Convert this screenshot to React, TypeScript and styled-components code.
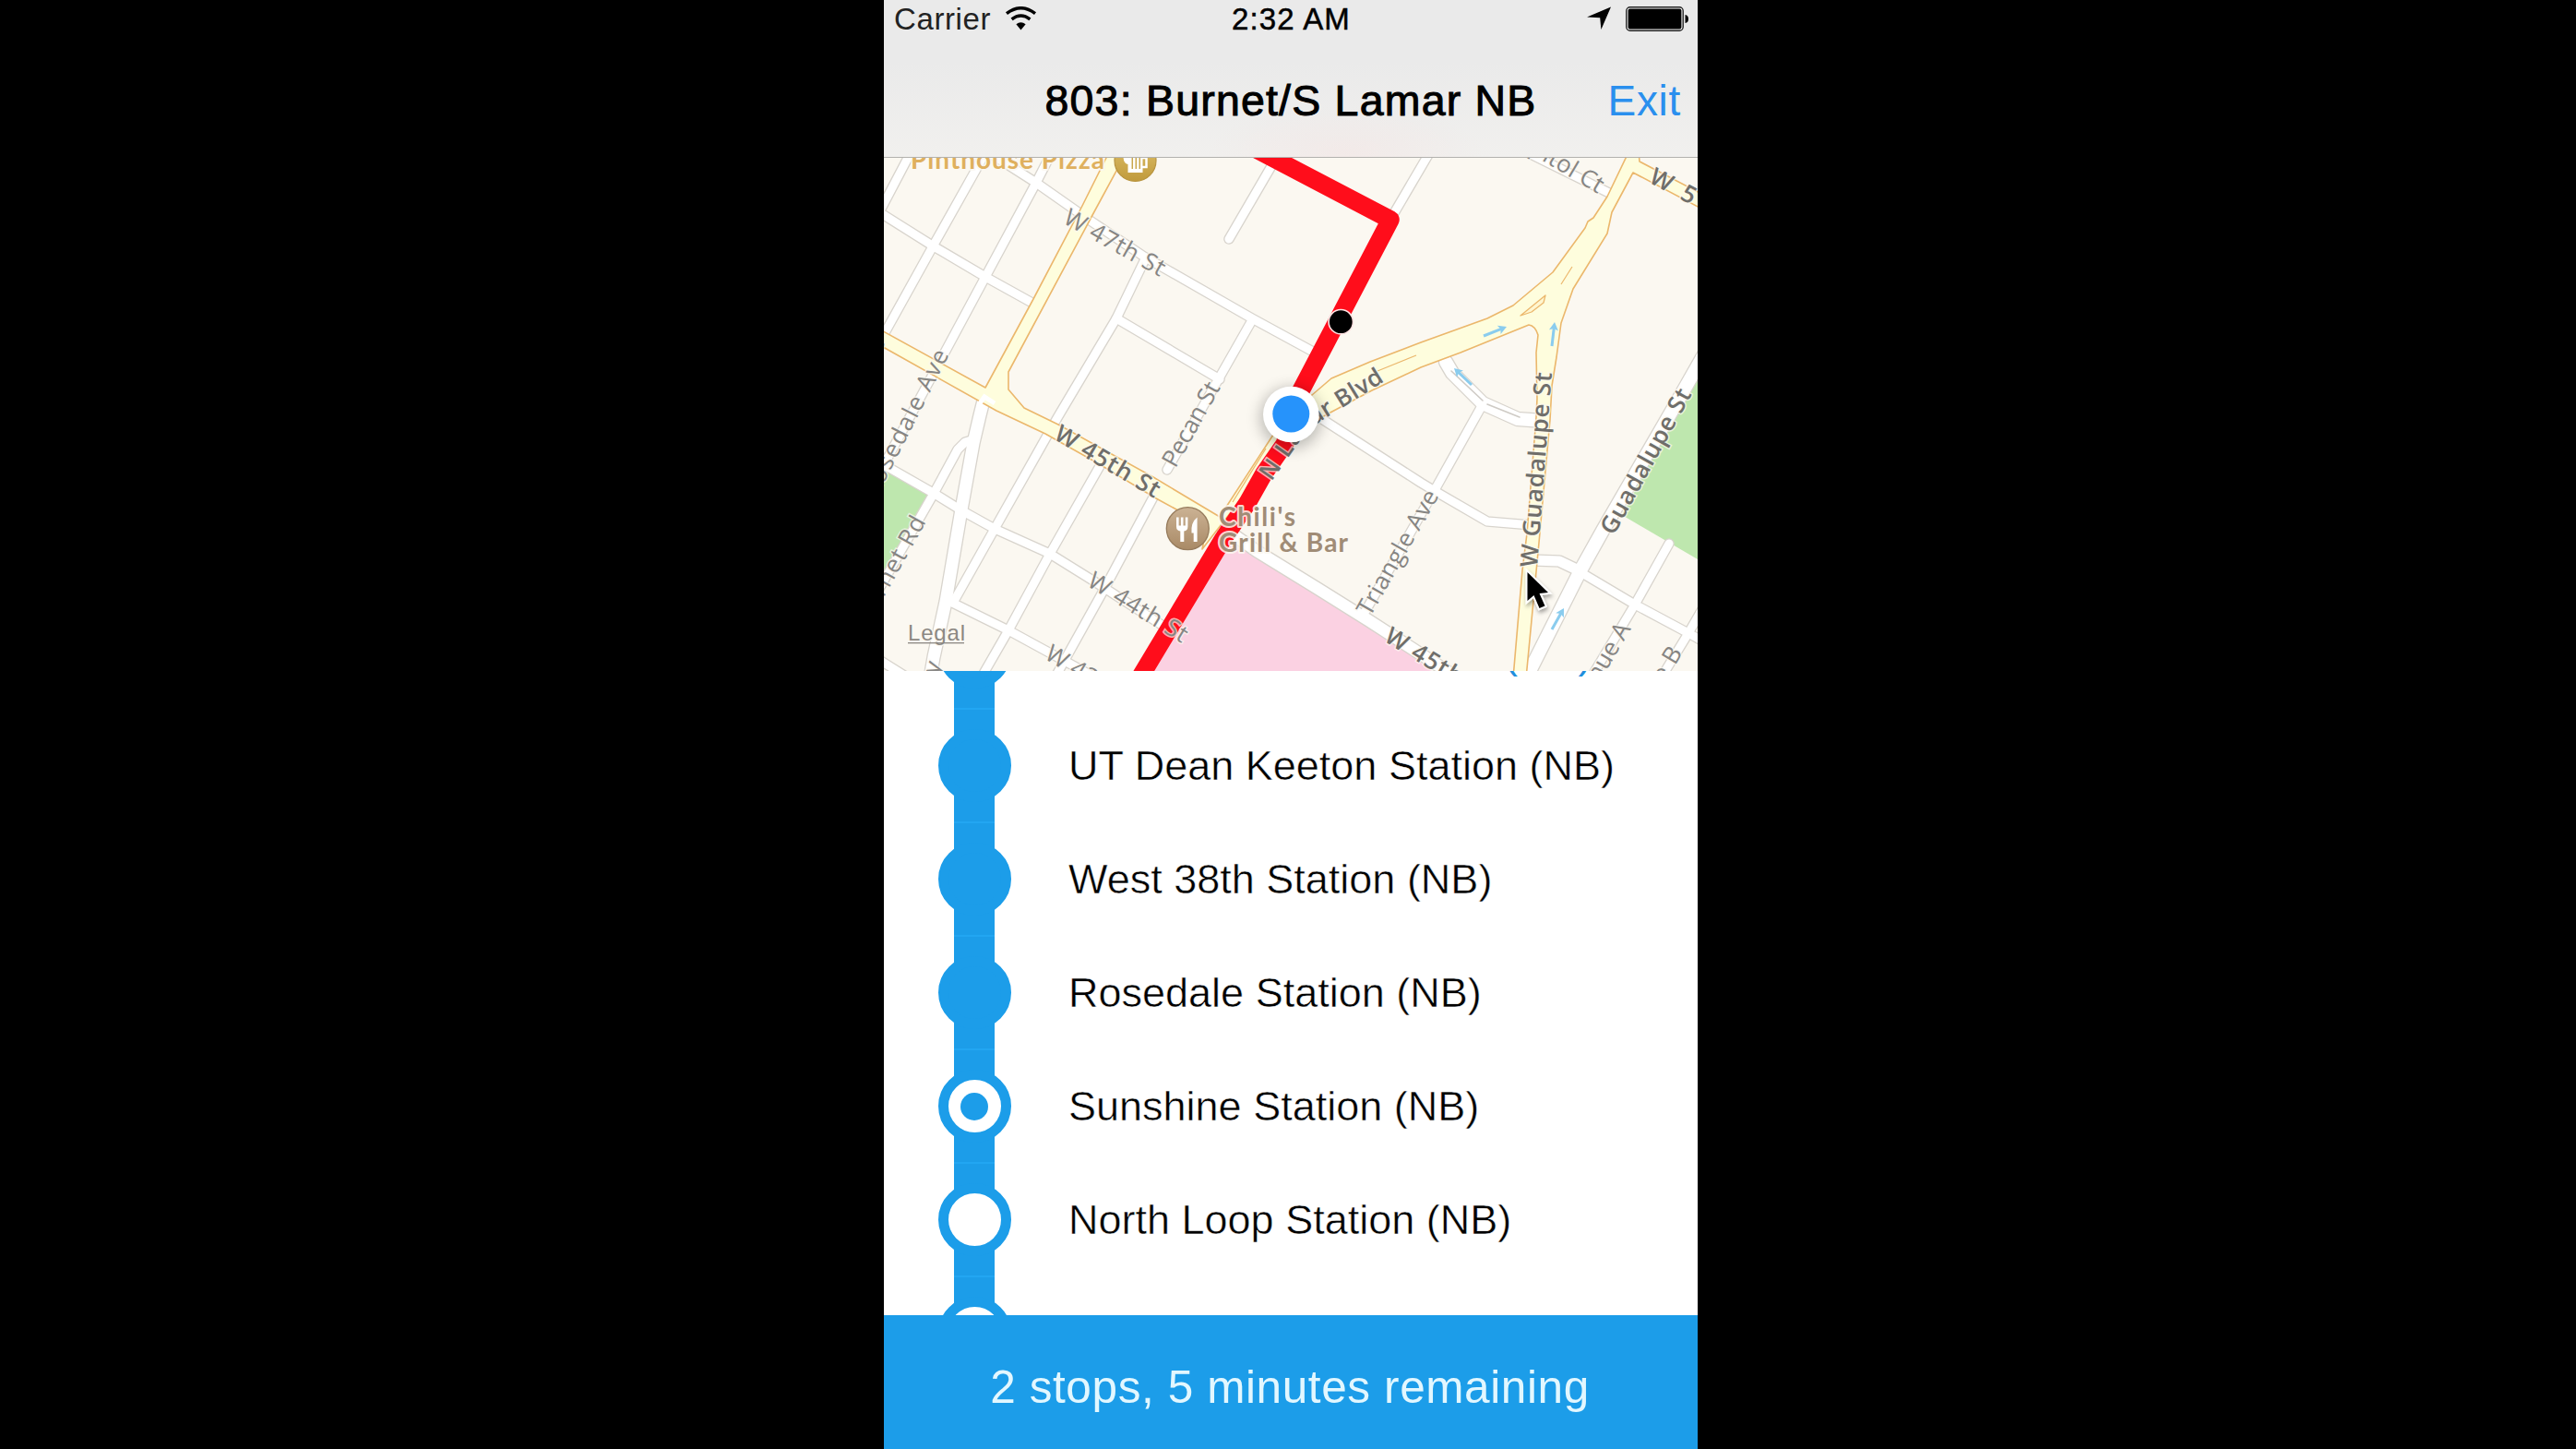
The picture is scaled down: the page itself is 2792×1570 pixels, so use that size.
import React from "react";
import styled, { createGlobalStyle, css } from "styled-components";

const BLUE = "#1c9de9";
const SANS = '"Liberation Sans", Arial, sans-serif';
const MAP_FONT = '"Open Sans", "Noto Sans", sans-serif';

const GlobalStyle = createGlobalStyle`
  html, body { margin: 0; background: #000; }
  * { box-sizing: border-box; }
`;

const Stage = styled.div`
  height: 1570px;
  padding-left: 958px;
  background: #000;
  overflow: hidden;
`;

const Phone = styled.main`
  display: flex;
  flex-direction: column;
  width: 882px;
  height: 1570px;
  background: #fff;
  font-family: ${SANS};
  color: #000;
`;

const Header = styled.header`
  flex: none;
  height: 171px;
  border-bottom: 1px solid #b2b1ae;
  background:
    radial-gradient(ellipse 150px 50px at 500px 165px, rgba(255, 200, 200, 0.14), transparent),
    linear-gradient(#eaeaea 0 40%, #f1f0ee);
`;

const StatusBar = styled.div`
  display: grid;
  grid-template-columns: 1fr auto 1fr;
  align-items: center;
  height: 42px;
  padding: 0 10px 0 11px;
  font-size: 33px;
  line-height: 42px;
  white-space: nowrap;
`;

const StatusGroup = styled.div<{ $end?: boolean }>`
  display: flex;
  align-items: center;
  justify-content: ${(p) => (p.$end ? "flex-end" : "flex-start")};
  gap: ${(p) => (p.$end ? 16 : 15)}px;
  letter-spacing: 0.6px;
  color: #222;
  svg { display: block; margin-bottom: 2px; }
`;

const Clock = styled.span`
  letter-spacing: 1.1px;
  -webkit-text-stroke: 0.5px #000;
`;

const NavBar = styled.div`
  display: grid;
  grid-template-columns: 1fr auto 1fr;
  align-items: center;
  height: 128px;
  padding: 6px 18px 0;
  line-height: 60px;
  white-space: nowrap;
`;

const Title = styled.h1`
  grid-column: 2;
  margin: 0;
  font-size: 46.5px;
  font-weight: 400;
  letter-spacing: 1.2px;
  -webkit-text-stroke: 1px #000;
`;

const ExitButton = styled.button`
  justify-self: end;
  padding: 0;
  border: 0;
  background: none;
  font: 46px/60px ${SANS};
  letter-spacing: 0.7px;
  color: #2a8fee;
`;

const MapPane = styled.section`
  flex: none;
  height: 556px;
  background: #fbf8f1;
  svg { display: block; }
`;

const StopList = styled.ul`
  flex: none;
  height: 698px;
  margin: 0;
  padding: 0;
  overflow: hidden;
  list-style: none;
`;

const StopRow = styled.li`
  display: flex;
  align-items: center;
  gap: 62px;
  height: 123px;
  padding-left: 58px;
  &:first-child { margin-top: -82px; }
`;

const Rail = styled.div`
  display: grid;
  place-items: center;
  width: 80px;
  height: 123px;
  background:
    linear-gradient(#22a6f2, #22a6f2) center top / 44px 1px no-repeat,
    linear-gradient(#22a6f2, #22a6f2) center bottom / 44px 1px no-repeat,
    linear-gradient(${BLUE}, ${BLUE}) center / 44px 100% no-repeat;
`;

type StopState = "passed" | "current" | "ahead";

const Node = styled.span<{ $state: StopState }>`
  display: grid;
  place-items: center;
  width: 79px;
  height: 79px;
  border: 11px solid ${BLUE};
  border-radius: 50%;
  background: ${(p) => (p.$state === "passed" ? BLUE : "#fff")};
  ${(p) =>
    p.$state === "current" &&
    css`
      &::after {
        content: "";
        width: 30px;
        height: 30px;
        border-radius: 50%;
        background: ${BLUE};
      }
    `}
`;

const StopName = styled.span<{ $peek?: boolean }>`
  font-size: 45px;
  line-height: 60px;
  white-space: nowrap;
  color: ${(p) => (p.$peek ? "#1f8fdd" : "#000")};
  padding: ${(p) => (p.$peek ? "4px 0 0 472px" : "0")};
  letter-spacing: ${(p) => (p.$peek ? "1px" : "0")};
  -webkit-text-stroke: ${(p) => (p.$peek ? "0" : "0.5px #fff")};
`;

const Footer = styled.footer`
  flex: 1;
  display: flex;
  align-items: center;
  justify-content: center;
  padding: 10px 2px 0 0;
  background: ${BLUE};
  font-size: 49.5px;
  letter-spacing: 0.6px;
  color: #e2f7ff;
  white-space: nowrap;
`;

const WifiIcon = () => (
  <svg width="35" height="26" viewBox="0 0 35 26">
    <path d="M2 7.6Q17.5 -4.2 33 7.6" fill="none" stroke="#000" strokeWidth="3.4" />
    <path d="M7.6 13.8Q17.5 6 27.4 13.8" fill="none" stroke="#000" strokeWidth="3.4" />
    <path d="M12.4 19.2Q17.5 15.2 22.6 19.2L17.5 25.4Z" />
  </svg>
);

const LocationIcon = () => (
  <svg width="26" height="26" viewBox="0 0 26 26">
    <path d="M26 0.5L15.4 25L14.2 12.2L0 11.4Z" />
  </svg>
);

const BatteryIcon = () => (
  <svg width="68" height="27" viewBox="0 0 68 27">
    <rect x="0.8" y="0.8" width="61.4" height="25.4" rx="4" fill="#f4f4f4" stroke="#222" strokeWidth="1.4" />
    <rect x="2.6" y="2.6" width="57.8" height="21.8" rx="2" />
    <path d="M64.5 9q3.5 0.5 3.5 4.5t-3.5 4.5z" />
  </svg>
);

const STREETS: [string, number?][] = [
  ["1000,143 983,173 952,232"],
  ["1066,169 1056,187 1011,267 956,366"],
  ["1140,165 1123,198 1068,300 1025,380 960,500"],
  ["950,228 1012,267 1068,300 1124,331"],
  ["1076,168 1123,198 1180,238 1240,278 1357,345 1425,382"],
  ["1240,283 1210,345 1147,451 1135,472 1078,573 1033,653"],
  ["1210,345 1322,411"],
  ["1357,347 1320,412 1265,509"],
  ["1378,180 1332,259"],
  ["1552,161 1508,236"],
  ["1056,476 1046,479 1038,487 1013,533 970,608 950,643"],
  ["950,499 1013,535 1042,553 1078,573 1138,600 1183,628 1262,679"],
  ["1196,498 1138,600 1093,683 1063,735"],
  ["1252,535 1197,638 1143,735"],
  ["1030,652 1093,683 1137,707 1185,733"],
  ["950,713 985,735"],
  ["1067,430 1062,450 1055,480 1042,552 1025,652 1012,712 1008,735", 13],
  ["1425,449 1540,523 1555,532 1612,565 1660,569"],
  ["1607,438 1555,531 1480,662"],
  ["1567,392 1574,404 1607,437 1645,454 1672,456", 14],
  ["1325,571 1362,597 1427,637 1483,672 1545,712 1580,735", 12.5],
  ["1655,165 1746,210"],
  ["1847,384 1818,435 1737,575 1713,618 1654,735", 14],
  ["1662,607 1690,608 1713,619", 11],
  ["1713,620 1772,655 1830,686 1848,696"],
  ["1809,589 1772,655 1724,735"],
  ["1848,655 1830,686 1800,735"],
];

type LabelSpec = {
  t: string;
  from: [number, number];
  to: [number, number];
  strong?: boolean;
};

const LABELS: LabelSpec[] = [
  { t: "W 47th St", from: [1151, 241], to: [1257, 300] },
  { t: "W 45th St", from: [1141, 475], to: [1251, 540], strong: true },
  { t: "W 44th St", from: [1177, 634], to: [1281, 697] },
  { t: "W 43rd St", from: [1131, 713], to: [1233, 775] },
  { t: "Rosedale Ave", from: [949, 541], to: [1029, 384] },
  { t: "e", from: [953, 384], to: [961, 369] },
  { t: "Pecan St", from: [1274, 508], to: [1323, 420] },
  { t: "Triangle Ave", from: [1485, 669], to: [1560, 537] },
  { t: "y", from: [1017, 732], to: [1021, 719] },
  { t: "Burnet Rd", from: [941, 678], to: [1004, 565] },
  { t: "Capitol Ct", from: [1630, 149], to: [1732, 210] },
  { t: "W 5", from: [1786, 197], to: [1833, 222], strong: true },
  { t: "W Guadalupe St", from: [1666, 615], to: [1682, 404], strong: true },
  { t: "Guadalupe St", from: [1749, 581], to: [1834, 427], strong: true },
  { t: "W 45th St", from: [1499, 694], to: [1609, 761], strong: true },
  { t: "Avenue A", from: [1711, 778], to: [1768, 681] },
  { t: "Avenue B", from: [1764, 808], to: [1824, 707] },
  { t: "N La", from: [1378, 522], to: [1413, 472], strong: true },
  { t: "ar Blvd", from: [1424, 461], to: [1501, 413], strong: true },
];

const MapLabel = ({ t, from, to, strong }: LabelSpec) => {
  const dx = to[0] - from[0];
  const dy = to[1] - from[1];
  const angle = (Math.atan2(dy, dx) * 180) / Math.PI;
  return (
    <text
      transform={`translate(${from[0]} ${from[1]}) rotate(${angle})`}
      textLength={Math.hypot(dx, dy)}
      fontSize={strong ? 26 : 26}
      fontWeight={strong ? 600 : 400}
      fill={strong ? "#6f6e6a" : "#868583"}
      stroke="#fbf8f1"
      strokeOpacity="0.7"
      strokeWidth="3"
      paintOrder="stroke"
    >
      {t}
    </text>
  );
};

const OneWayArrow = ({ from, to }: { from: [number, number]; to: [number, number] }) => {
  const dx = to[0] - from[0];
  const dy = to[1] - from[1];
  const len = Math.hypot(dx, dy);
  return (
    <g transform={`translate(${from[0]} ${from[1]}) rotate(${(Math.atan2(dy, dx) * 180) / Math.PI})`} fill="#8accee">
      <rect x="0" y="-1.5" width={len - 5} height="3" />
      <path d={`M${len} 0L${len - 9} -5L${len - 7} 0L${len - 9} 5Z`} />
    </g>
  );
};

const TransitMap = () => (
  <svg width="882" height="556" viewBox="958 171 882 556" fontFamily={MAP_FONT}>
    <defs>
      <linearGradient id="food" x1="0" y1="0" x2="0" y2="1">
        <stop offset="0" stopColor="#cbb294" />
        <stop offset="1" stopColor="#a98a66" />
      </linearGradient>
      <linearGradient id="beer" x1="0" y1="0" x2="0" y2="1">
        <stop offset="0" stopColor="#e0c26c" />
        <stop offset="1" stopColor="#c09a3c" />
      </linearGradient>
      <filter id="soft" x="-50%" y="-50%" width="200%" height="200%">
        <feGaussianBlur stdDeviation="8" />
      </filter>
      <filter id="cursorShadow" x="-50%" y="-50%" width="200%" height="200%">
        <feDropShadow dx="1" dy="3" stdDeviation="2" floodOpacity="0.35" />
      </filter>
    </defs>

    <rect x="958" y="171" width="882" height="556" fill="#fbf8f1" />
    <path d="M958 508L1009 537L958 624Z" fill="#bee7ae" />
    <path d="M1840 408L1818 446L1758 558L1840 606Z" fill="#bee7ae" />
    <path d="M1322 576L1362 600L1427 641L1500 688L1552 727H1242Z" fill="#fbd1e2" />

    <g fill="none" strokeLinecap="round" strokeLinejoin="round">
      {STREETS.map(([points, w = 9], i) => (
        <polyline key={i} points={points} stroke="#d8d4cd" strokeWidth={w + 2.6} />
      ))}
      {STREETS.map(([points, w = 9], i) => (
        <polyline key={i} points={points} stroke="#fff" strokeWidth={w} />
      ))}
      <path d="M1573 402L1607 434M1612 438L1647 452" stroke="#cfcbc5" strokeWidth="1.6" />
    </g>

    <g fill="#fefddd" stroke="#ebb76c" strokeWidth="1.6" strokeLinejoin="round">
      <path d="M950 355L1068 420L1120 324L1173 223L1203 163L1222 163L1183 235L1093 403V422L1110 442L1147 460L1250 517L1322 560L1380 471L1400 440L1422 428L1443 410L1485 392L1540 371L1612 345L1640 331L1683 295L1718 247L1721 240L1727 236L1742 213L1766 163H1776L1777 175L1848 212V228L1770 187L1747 230L1742 253L1705 313L1692 350L1687 387L1682 418L1680 455L1668 588L1654 735H1640L1650 618L1655 578L1665 452L1666 432L1665 382L1667 363Q1664 353 1657 352L1583 382L1540 398L1487 423L1440 448L1400 470L1303 595L1308 570L1253 540L1190 502L1133 470L1080 445L950 372Z" />
      <path d="M1648 342L1675 320L1673 328L1660 338Z" fill="#fff6cf" strokeWidth="1.3" />
      <path d="M1692 308L1704 289M1493 402L1535 385" strokeWidth="1.2" />
      <path d="M1372 486L1336 544" strokeWidth="1.2" />
    </g>
    <path d="M1062 437L1067 430L1078 437" fill="none" stroke="#fff" strokeWidth="5" />

    <polyline
      points="1360,161 1507,238 1397,448 1393,480 1370,513 1352,545 1325,585 1235,735"
      fill="none"
      stroke="#ff0d1b"
      strokeWidth="19.5"
      strokeLinejoin="round"
    />

    <OneWayArrow from={[1608, 364]} to={[1633, 354]} />
    <OneWayArrow from={[1682, 375]} to={[1685, 349]} />
    <OneWayArrow from={[1595, 417]} to={[1576, 399]} />
    <OneWayArrow from={[1682, 682]} to={[1695, 659]} />

    {LABELS.map((l, i) => (
      <MapLabel key={i} {...l} />
    ))}

    <g fontFamily="Lato, sans-serif" fontWeight="700" fontSize="28" stroke="#fbf8f1" strokeOpacity="0.85" strokeWidth="4" paintOrder="stroke" strokeLinejoin="round">
      <text x="987" y="183" textLength="210" fill="#dfb05e">Pinthouse Pizza</text>
      <text x="1321" y="569.5" textLength="83" fill="#a08c76">Chili's</text>
      <text x="1321" y="597.5" textLength="140" fill="#a08c76">Grill &amp; Bar</text>
    </g>

    <circle cx="1230.5" cy="174" r="22.5" fill="url(#beer)" stroke="#b8943f" strokeWidth="1.2" />
    <g fill="#fff">
      <path d="M1222.500 160H1238.500V187H1222.500Z" />
      <path d="M1238 171H1242.500V181H1238" fill="none" stroke="#fff" strokeWidth="2.500" />
      <path d="M1217.500 170.500H1223V178Q1218 178 1217.500 170.500Z" />
      <path d="M1227.300 170V183M1231.300 170V183M1235.300 170V183" stroke="#c9a64c" strokeWidth="1.500" />
    </g>

    <circle cx="1287.3" cy="572.7" r="23" fill="url(#food)" stroke="#967b5c" strokeWidth="1.3" />
    <g fill="#fff">
      <path d="M1275 560.500h2.600v9h2.300v-9h2.600v9h2.300v-9h2.600v10q0 4.500-4.100 5v11.500h-4v-11.500q-4.300-.500-4.300-5z" />
      <path d="M1297.600 560.500V587H1293.700V577.500H1291.500Q1290.500 566 1297.600 560.500Z" />
    </g>

    <text x="984" y="694" fontFamily={SANS} fontSize="24" textLength="62" fill="#8c8883" stroke="#fbf8f1" strokeWidth="2.500" paintOrder="stroke">
      Legal
    </text>
    <rect x="984" y="696" width="61" height="1.300" fill="#8c8883" />

    <circle cx="1453.300" cy="348.700" r="13.200" fill="#000" stroke="#ffe3e3" strokeWidth="1.600" />

    <circle cx="1399.300" cy="453" r="33" fill="#000" opacity="0.250" filter="url(#soft)" />
    <circle cx="1399.300" cy="449" r="30.300" fill="#fff" />
    <circle cx="1399.300" cy="448.500" r="20" fill="#2693fb" />

    <path
      d="M1655.500 620V651L1662.500 645L1668.500 659L1674.500 656.500L1668.500 643L1678 642Z"
      stroke="#fff"
      strokeWidth="4"
      paintOrder="stroke"
      filter="url(#cursorShadow)"
    />
  </svg>
);

const STOPS: { name: string; state: StopState; peek?: boolean }[] = [
  { name: "(NB)", state: "passed", peek: true },
  { name: "UT Dean Keeton Station (NB)", state: "passed" },
  { name: "West 38th Station (NB)", state: "passed" },
  { name: "Rosedale Station (NB)", state: "passed" },
  { name: "Sunshine Station (NB)", state: "current" },
  { name: "North Loop Station (NB)", state: "ahead" },
  { name: "", state: "ahead" },
];

export default function App() {
  return (
    <Stage>
      <GlobalStyle />
      <Phone>
        <Header>
          <StatusBar>
            <StatusGroup>
              <span>Carrier</span>
              <WifiIcon />
            </StatusGroup>
            <Clock>2:32 AM</Clock>
            <StatusGroup $end>
              <LocationIcon />
              <BatteryIcon />
            </StatusGroup>
          </StatusBar>
          <NavBar>
            <Title>803: Burnet/S Lamar NB</Title>
            <ExitButton>Exit</ExitButton>
          </NavBar>
        </Header>
        <MapPane>
          <TransitMap />
        </MapPane>
        <StopList>
          {STOPS.map((s, i) => (
            <StopRow key={i}>
              <Rail>
                <Node $state={s.state} />
              </Rail>
              <StopName $peek={s.peek}>{s.name}</StopName>
            </StopRow>
          ))}
        </StopList>
        <Footer>2 stops, 5 minutes remaining</Footer>
      </Phone>
    </Stage>
  );
}
